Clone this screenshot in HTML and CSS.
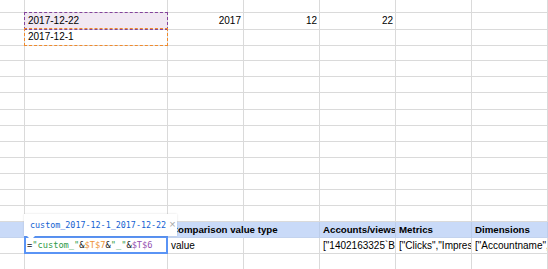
FILE: index.html
```html
<!DOCTYPE html>
<html lang="en">
<head>
    <meta charset="UTF-8">
    <title>Sheet formula</title>
    <link rel="stylesheet" href="styles.css">
</head>
<body>

<div class="sheet">
    <div class="row top">
        <div class="c"></div><div class="c"></div><div class="c"></div><div class="c"></div><div class="c"></div><div class="c"></div><div class="c"></div>
    </div>
    <div class="row">
        <div class="c"></div>
        <div class="c copied purple">2017-12-22</div>
        <div class="c num">2017</div>
        <div class="c num">12</div>
        <div class="c num">22</div>
        <div class="c"></div><div class="c"></div>
    </div>
    <div class="row">
        <div class="c"></div>
        <div class="c copied orange">2017-12-1</div>
        <div class="c"></div><div class="c"></div><div class="c"></div><div class="c"></div><div class="c"></div>
    </div>
    <div class="row"><div class="c"></div><div class="c"></div><div class="c"></div><div class="c"></div><div class="c"></div><div class="c"></div><div class="c"></div></div>
    <div class="row"><div class="c"></div><div class="c"></div><div class="c"></div><div class="c"></div><div class="c"></div><div class="c"></div><div class="c"></div></div>
    <div class="row"><div class="c"></div><div class="c"></div><div class="c"></div><div class="c"></div><div class="c"></div><div class="c"></div><div class="c"></div></div>
    <div class="row tall"><div class="c"></div><div class="c"></div><div class="c"></div><div class="c"></div><div class="c"></div><div class="c"></div><div class="c"></div></div>
    <div class="row"><div class="c"></div><div class="c"></div><div class="c"></div><div class="c"></div><div class="c"></div><div class="c"></div><div class="c"></div></div>
    <div class="row"><div class="c"></div><div class="c"></div><div class="c"></div><div class="c"></div><div class="c"></div><div class="c"></div><div class="c"></div></div>
    <div class="row"><div class="c"></div><div class="c"></div><div class="c"></div><div class="c"></div><div class="c"></div><div class="c"></div><div class="c"></div></div>
    <div class="row"><div class="c"></div><div class="c"></div><div class="c"></div><div class="c"></div><div class="c"></div><div class="c"></div><div class="c"></div></div>
    <div class="row"><div class="c"></div><div class="c"></div><div class="c"></div><div class="c"></div><div class="c"></div><div class="c"></div><div class="c"></div></div>
    <div class="row"><div class="c"></div><div class="c"></div><div class="c"></div><div class="c"></div><div class="c"></div><div class="c"></div><div class="c"></div></div>
    <div class="row"><div class="c"></div><div class="c"></div><div class="c"></div><div class="c"></div><div class="c"></div><div class="c"></div><div class="c"></div></div>

    <!-- header row -->
    <div class="row head">
        <div class="c"></div>
        <div class="c"></div>
        <div class="c spill">Comparison value type</div>
        <div class="c"></div>
        <div class="c">Accounts/views</div>
        <div class="c">Metrics</div>
        <div class="c">Dimensions</div>
    </div>

    <!-- row being edited -->
    <div class="row">
        <div class="c"></div>
        <div class="c editing">
            <div class="editor"><span class="op">=</span><span class="str">"custom_"</span><span class="op">&amp;</span><span class="ref1">$T$7</span><span class="op">&amp;</span><span class="str">"_"</span><span class="op">&amp;</span><span class="ref2">$T$6</span></div>
            <div class="preview">custom_2017-12-1_2017-12-22<span class="close">×</span></div>
        </div>
        <div class="c">value</div>
        <div class="c"></div>
        <div class="c">["1402163325`Bom"]</div>
        <div class="c">["Clicks","Impressions"]</div>
        <div class="c">["Accountname","Campaign"]</div>
    </div>
    <div class="row"><div class="c"></div><div class="c"></div><div class="c"></div><div class="c"></div><div class="c"></div><div class="c"></div><div class="c"></div></div>
</div>

</body>
</html>
```

FILE: styles.css
```css
body {
    margin: 0;
    font-family: "Liberation Sans", Arial, sans-serif;
    font-size: 10px;
    color: #000;
    background-color: #fff;
}
.sheet {
    width: 548px;
    overflow: hidden;
}
.row {
    display: grid;
    grid-template-columns: 25px 143px 76px 76px 76px 76px 76px;
    height: 16px;
}
.row.top {
    height: 13px;
}
.row.tall {
    height: 17px;
}
.c {
    box-sizing: border-box;
    border-right: 1px solid #dadada;
    border-bottom: 1px solid #dadada;
    padding: 0 2px 0 3px;
    line-height: 16px;
    white-space: nowrap;
    overflow: hidden;
}
.c.num {
    text-align: right;
}

/* copy / paste highlight */
.c.copied {
    position: relative;
    overflow: visible;
}
.c.copied::after {
    content: "";
    position: absolute;
    top: -1px;
    left: -1px;
    right: -1px;
    bottom: -1px;
    border: 1px dashed;
}
.c.purple {
    background-color: #f1e8f3;
}
.c.purple::after {
    border-color: #84439c;
}
.c.orange::after {
    border-color: #f08a2c;
}

/* header row */
.row.head {
    background-color: #c9daf8;
    font-weight: bold;
    font-size: 9.7px;
}
.row.head .c {
    line-height: 15px;
    border-right-color: #bccde9;
    border-bottom-color: #c3d3ee;
}
.c.spill {
    overflow: visible;
    border-right-color: transparent !important;
}

/* in-cell formula editor */
.c.editing {
    position: relative;
    overflow: visible;
}
.editor {
    position: absolute;
    top: -2px;
    left: -1px;
    width: 144px;
    height: 18px;
    box-sizing: border-box;
    border: 2px solid #5a94f5;
    background-color: #fff;
    padding-left: 1px;
    font-family: "DejaVu Sans Mono", monospace;
    font-size: 8.7px;
    line-height: 14px;
    color: #111;
}
.editor .str {
    color: #2f9a48;
}
.editor .ref1 {
    color: #ee9236;
}
.editor .ref2 {
    color: #9450b0;
}
.preview {
    position: absolute;
    top: -24px;
    left: -1px;
    width: 153px;
    height: 22px;
    box-sizing: border-box;
    padding: 3px 0 0 6px;
    background-color: #fff;
    box-shadow: 0 0 2px rgba(0, 0, 0, 0.12);
    font-family: "DejaVu Sans Mono", monospace;
    font-size: 8.4px;
    line-height: 14px;
    color: #1462d2;
}
.preview::after {
    content: "";
    position: absolute;
    left: 3px;
    bottom: -4px;
    border-left: 4px solid transparent;
    border-right: 4px solid transparent;
    border-top: 4px solid #fff;
}
.preview .close {
    margin-left: 3px;
    font-family: "Liberation Sans", Arial, sans-serif;
    font-size: 11px;
    color: #a8a8a8;
}
```
